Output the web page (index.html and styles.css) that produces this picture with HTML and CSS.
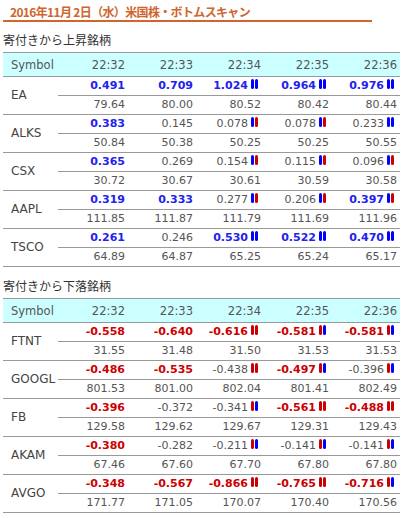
FILE: index.html
```html
<!DOCTYPE html>
<html lang="ja">
<head>
<meta charset="utf-8">
<title>米国株・ボトムスキャン</title>
<link rel="stylesheet" href="styles.css">
</head>
<body>
<h1 class="title">2016年11月 2日（水）米国株・ボトムスキャン</h1>

<h2 class="sub">寄付きから上昇銘柄</h2>
<table class="scan">
<colgroup><col class="c-sym"><col class="c-first"><col class="c-t"><col class="c-t"><col class="c-t"><col class="c-t"></colgroup>
<thead><tr><th class="sym">Symbol</th><th>22:32</th><th>22:33</th><th>22:34</th><th>22:35</th><th>22:36</th></tr></thead>
<tbody>
<tr class="rate"><td class="sym" rowspan="2">EA</td><td class="up">0.491</td><td class="up">0.709</td><td class="up">1.024<span class="ic"><i class="b"></i><i class="b"></i></span></td><td class="up">0.964<span class="ic"><i class="b"></i><i class="b"></i></span></td><td class="up">0.976<span class="ic"><i class="b"></i><i class="b"></i></span></td></tr>
<tr class="price"><td>79.64</td><td>80.00</td><td>80.52</td><td>80.42</td><td>80.44</td></tr>
</tbody>
<tbody>
<tr class="rate"><td class="sym" rowspan="2">ALKS</td><td class="up">0.383</td><td>0.145</td><td>0.078<span class="ic"><i class="b"></i><i class="r"></i></span></td><td>0.078<span class="ic"><i class="b"></i><i class="r"></i></span></td><td>0.233<span class="ic"><i class="b"></i><i class="b"></i></span></td></tr>
<tr class="price"><td>50.84</td><td>50.38</td><td>50.25</td><td>50.25</td><td>50.55</td></tr>
</tbody>
<tbody>
<tr class="rate"><td class="sym" rowspan="2">CSX</td><td class="up">0.365</td><td>0.269</td><td>0.154<span class="ic"><i class="b"></i><i class="r"></i></span></td><td>0.115<span class="ic"><i class="b"></i><i class="r"></i></span></td><td>0.096<span class="ic"><i class="b"></i><i class="r"></i></span></td></tr>
<tr class="price"><td>30.72</td><td>30.67</td><td>30.61</td><td>30.59</td><td>30.58</td></tr>
</tbody>
<tbody>
<tr class="rate"><td class="sym" rowspan="2">AAPL</td><td class="up">0.319</td><td class="up">0.333</td><td>0.277<span class="ic"><i class="b"></i><i class="r"></i></span></td><td>0.206<span class="ic"><i class="b"></i><i class="r"></i></span></td><td class="up">0.397<span class="ic"><i class="b"></i><i class="r"></i></span></td></tr>
<tr class="price"><td>111.85</td><td>111.87</td><td>111.79</td><td>111.69</td><td>111.96</td></tr>
</tbody>
<tbody>
<tr class="rate"><td class="sym" rowspan="2">TSCO</td><td class="up">0.261</td><td>0.246</td><td class="up">0.530<span class="ic"><i class="b"></i><i class="b"></i></span></td><td class="up">0.522<span class="ic"><i class="b"></i><i class="b"></i></span></td><td class="up">0.470<span class="ic"><i class="b"></i><i class="b"></i></span></td></tr>
<tr class="price"><td>64.89</td><td>64.87</td><td>65.25</td><td>65.24</td><td>65.17</td></tr>
</tbody>
</table>

<h2 class="sub second">寄付きから下落銘柄</h2>
<table class="scan">
<colgroup><col class="c-sym"><col class="c-first"><col class="c-t"><col class="c-t"><col class="c-t"><col class="c-t"></colgroup>
<thead><tr><th class="sym">Symbol</th><th>22:32</th><th>22:33</th><th>22:34</th><th>22:35</th><th>22:36</th></tr></thead>
<tbody>
<tr class="rate"><td class="sym" rowspan="2">FTNT</td><td class="dn">-0.558</td><td class="dn">-0.640</td><td class="dn">-0.616<span class="ic"><i class="r"></i><i class="r"></i></span></td><td class="dn">-0.581<span class="ic"><i class="r"></i><i class="b"></i></span></td><td class="dn">-0.581<span class="ic"><i class="r"></i><i class="b"></i></span></td></tr>
<tr class="price"><td>31.55</td><td>31.48</td><td>31.50</td><td>31.53</td><td>31.53</td></tr>
</tbody>
<tbody>
<tr class="rate"><td class="sym" rowspan="2">GOOGL</td><td class="dn">-0.486</td><td class="dn">-0.535</td><td>-0.438<span class="ic"><i class="r"></i><i class="r"></i></span></td><td class="dn">-0.497<span class="ic"><i class="r"></i><i class="b"></i></span></td><td>-0.396<span class="ic"><i class="r"></i><i class="b"></i></span></td></tr>
<tr class="price"><td>801.53</td><td>801.00</td><td>802.04</td><td>801.41</td><td>802.49</td></tr>
</tbody>
<tbody>
<tr class="rate"><td class="sym" rowspan="2">FB</td><td class="dn">-0.396</td><td>-0.372</td><td>-0.341<span class="ic"><i class="r"></i><i class="b"></i></span></td><td class="dn">-0.561<span class="ic"><i class="r"></i><i class="r"></i></span></td><td class="dn">-0.488<span class="ic"><i class="r"></i><i class="r"></i></span></td></tr>
<tr class="price"><td>129.58</td><td>129.62</td><td>129.67</td><td>129.31</td><td>129.43</td></tr>
</tbody>
<tbody>
<tr class="rate"><td class="sym" rowspan="2">AKAM</td><td class="dn">-0.380</td><td>-0.282</td><td>-0.211<span class="ic"><i class="r"></i><i class="b"></i></span></td><td>-0.141<span class="ic"><i class="r"></i><i class="b"></i></span></td><td>-0.141<span class="ic"><i class="r"></i><i class="b"></i></span></td></tr>
<tr class="price"><td>67.46</td><td>67.60</td><td>67.70</td><td>67.80</td><td>67.80</td></tr>
</tbody>
<tbody>
<tr class="rate"><td class="sym" rowspan="2">AVGO</td><td class="dn">-0.348</td><td class="dn">-0.567</td><td class="dn">-0.866<span class="ic"><i class="r"></i><i class="r"></i></span></td><td class="dn">-0.765<span class="ic"><i class="r"></i><i class="r"></i></span></td><td class="dn">-0.716<span class="ic"><i class="r"></i><i class="b"></i></span></td></tr>
<tr class="price"><td>171.77</td><td>171.05</td><td>170.07</td><td>170.40</td><td>170.56</td></tr>
</tbody>
</table>
</body>
</html>
```
FILE: styles.css
```css
body {
  margin: 0;
  padding: 0 3px;
  background: #fff;
  font-family: "DejaVu Sans", Verdana, sans-serif;
  color: #555;
}

.title {
  margin: 0;
  width: 369px;
  box-sizing: border-box;
  padding: 3px 0 0 7px;
  font: bold 12px/17px "Noto Sans CJK JP", sans-serif;
  letter-spacing: -0.65px;
  color: #d0652e;
  border-bottom: 2px solid #d0652e;
}

.sub {
  margin: 9px 0 3px;
  font: normal 12px/18px "Noto Sans CJK JP", sans-serif;
  color: #333;
}

.sub.second {
  margin-top: 10px;
}

.scan {
  border-collapse: collapse;
  table-layout: fixed;
  width: 397px;
  border-top: 1px solid #999;
}

.c-sym { width: 55px; }
.c-first { width: 70px; }
.c-t { width: 68px; }

.scan th {
  height: 23px;
  padding: 0 3px;
  background: #ccffff;
  border-bottom: 1px solid #999;
  font-weight: normal;
  font-size: 11.5px;
  color: #555;
  text-align: right;
}

.scan th.sym,
.scan td.sym {
  text-align: left;
  padding-left: 8px;
}

.scan tr {
  height: 19px;
}

.scan td {
  padding: 0 3px;
  font-size: 11px;
  line-height: 18px;
  text-align: right;
  white-space: nowrap;
  border-bottom: 1px solid #999;
}

.scan td.sym {
  font-size: 12px;
  color: #444;
  padding-bottom: 2px;
}

.scan td.up {
  color: #2222ee;
  font-weight: bold;
}

.scan td.dn {
  color: #cc0000;
  font-weight: bold;
}

.ic {
  display: inline-flex;
  gap: 1px;
  margin: 0 3px 0 3px;
  vertical-align: baseline;
}

.ic i {
  display: block;
  width: 3px;
  height: 10px;
  border-radius: 1.5px;
}

.ic .b { background: #0000ff; }
.ic .r { background: #cc0000; }
```
